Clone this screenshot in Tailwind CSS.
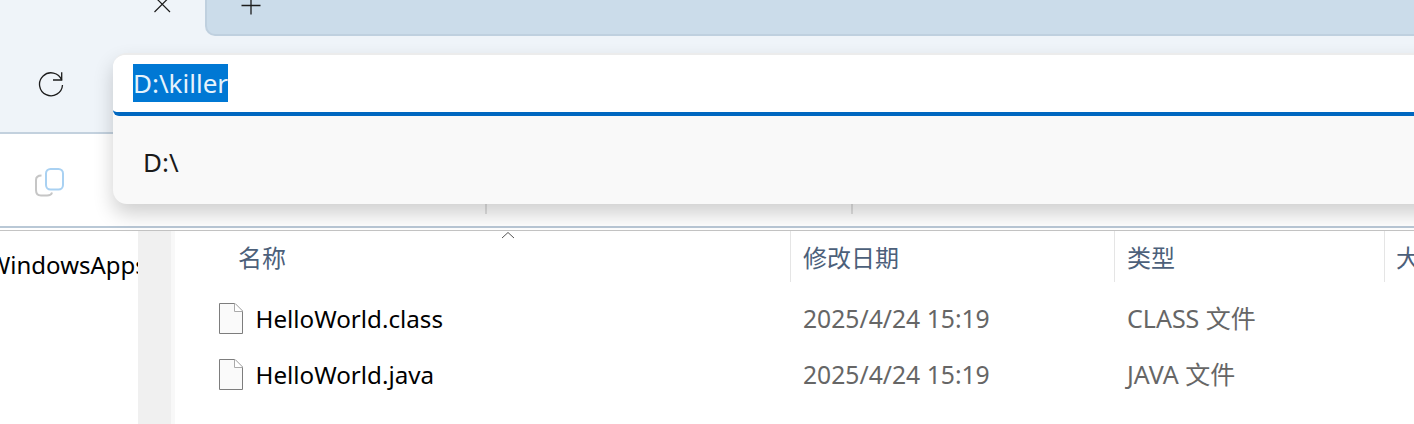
<!DOCTYPE html>
<html lang="zh-CN">
<head>
<meta charset="utf-8">
<script src="https://cdn.jsdelivr.net/npm/@tailwindcss/browser@4"></script>
<title>Explorer</title>
</head>
<body class="m-0 overflow-hidden bg-white">
<div class="relative w-[1414px] h-[424px] overflow-hidden bg-white font-['Noto_Sans','Noto_Sans_CJK_SC',sans-serif]">
  <!-- tab strip -->
  <div class="flex h-[36px] bg-[#eff4f9]">
    <div class="relative w-[205px] shrink-0">
      <svg class="absolute left-[153px] top-0" width="20" height="14" viewBox="0 0 20 14" fill="none" stroke="#1c1c1c" stroke-width="1.2"><path d="M1.5 -3.5 L17 12 M17 -3.5 L1.5 12"/></svg>
    </div>
    <div class="relative flex-1 bg-[#cbdcea] border-b-2 border-l-2 border-[#bfd0df] rounded-bl-[10px]">
      <svg class="absolute left-[33px] top-0" width="22" height="16" viewBox="0 0 22 16" fill="none" stroke="#1c1c1c" stroke-width="1.3"><path d="M11 -4 V14.5 M1.5 5.5 H20.5"/></svg>
    </div>
  </div>
  <!-- address row -->
  <div class="flex items-center h-[98px] bg-[#eff4f9] border-b-2 border-[#c3d1de]">
    <svg class="ml-[38px]" width="26" height="26" viewBox="0 0 26 26" fill="none" stroke="#1c1c1c" stroke-width="1.3"><path d="M23.7 9 A11.5 11.5 0 1 0 24.5 14"/><path d="M23.7 1.2 V9 H15"/></svg>
  </div>
  <!-- toolbar -->
  <div class="relative h-[94px] bg-white border-b-2 border-[#b9c8d6]">
    <svg class="absolute left-[34px] top-[32px]" width="31" height="32" viewBox="0 0 31 32" fill="none" stroke-width="2"><path d="M7.5 9.5 C4 9.5 2 11.5 2 14 V24 C2 27.5 4 29.5 7 29.5 H13 C15.5 29.5 17.5 28.5 18 26.5" stroke="#c6c6c6"/><rect x="12" y="3" width="17" height="20.5" rx="4.5" stroke="#a9d1f2" fill="#fff"/></svg>
    <div class="absolute left-[485px] top-[70px] w-[2px] h-[10px] bg-[#e2e2e2]"></div>
    <div class="absolute left-[851px] top-[70px] w-[2px] h-[10px] bg-[#e2e2e2]"></div>
  </div>
  <!-- body -->
  <div class="flex h-[194px] mt-[2px] border-t border-[#c4c4c4]">
    <div class="w-[138px] shrink-0 overflow-hidden">
      <div class="ml-[-12px] mt-[18px] whitespace-nowrap text-[24px] leading-[32px] text-black">WindowsApps</div>
    </div>
    <div class="w-[33px] shrink-0 bg-[#f0f0f0]"></div>
    <div class="w-[4px] shrink-0 bg-[#f8f8f8]"></div>
    <div class="relative flex-1">
      <svg class="absolute left-[326px] top-0" width="14" height="8" viewBox="0 0 14 8" fill="none" stroke="#555" stroke-width="1"><path d="M1 7 L7 1.5 L13 7"/></svg>
      <div class="flex h-[51px] text-[#4c607a] text-[24px] leading-[32px]">
        <div class="w-[615px] pl-[63px] pt-[11px]">名称</div>
        <div class="w-[324px] pl-[12px] pt-[11px] border-l border-[#e5e5e5]">修改日期</div>
        <div class="w-[270px] pl-[12px] pt-[11px] border-l border-[#e5e5e5]">类型</div>
        <div class="flex-1 pl-[11px] pt-[11px] border-l border-[#e5e5e5] overflow-hidden whitespace-nowrap">大小</div>
      </div>
      <div class="pt-[9px]">
        <div class="flex items-center h-[56px]">
          <div class="flex items-center w-[615px] pl-[44px] gap-[12.5px] text-[24.2px] text-black">
            <svg width="24" height="31" viewBox="0 0 24 31" fill="#fafafa" stroke="#7d7d7d" stroke-width="1"><path d="M0.5 0.5 H16 L23.5 8 V30.5 H0.5 Z"/><path d="M15.5 0.5 V8.5 H23.5" fill="#fff" stroke="#aaa"/></svg>
            <span>HelloWorld.class</span>
          </div>
          <div class="w-[324px] pl-[13px] text-[24.7px] text-[#666]">2025/4/24 15:19</div>
          <div class="pl-[13px] text-[25px] text-[#666]">CLASS 文件</div>
        </div>
        <div class="flex items-center h-[56px]">
          <div class="flex items-center w-[615px] pl-[44px] gap-[12.5px] text-[24.2px] text-black">
            <svg width="24" height="31" viewBox="0 0 24 31" fill="#fafafa" stroke="#7d7d7d" stroke-width="1"><path d="M0.5 0.5 H16 L23.5 8 V30.5 H0.5 Z"/><path d="M15.5 0.5 V8.5 H23.5" fill="#fff" stroke="#aaa"/></svg>
            <span>HelloWorld.java</span>
          </div>
          <div class="w-[324px] pl-[13px] text-[24.7px] text-[#666]">2025/4/24 15:19</div>
          <div class="pl-[13px] text-[25px] text-[#666]">JAVA 文件</div>
        </div>
      </div>
    </div>
  </div>
  <!-- address dropdown overlay -->
  <div class="absolute left-[113px] top-[53px] w-[1340px] h-[151px] rounded-[14px] bg-[#f9f9f9] shadow-[0_10px_20px_rgba(0,0,0,0.19)] border-t-2 border-[#ececec]">
    <div class="flex items-center h-[61px] bg-white rounded-t-[12px] pl-[20px] pb-[1px] border-b-4 border-[#0067c0] rounded-bl-[6px]">
      <span class="bg-[#0078d4] text-[#e6f3fc] text-[26px] leading-[38px] h-[38px]">D:\killer</span>
    </div>
    <div class="pl-[30px] pt-[28px] text-[26px] leading-[36px] text-[#1a1a1a]">D:\</div>
  </div>
</div>
</body>
</html>
